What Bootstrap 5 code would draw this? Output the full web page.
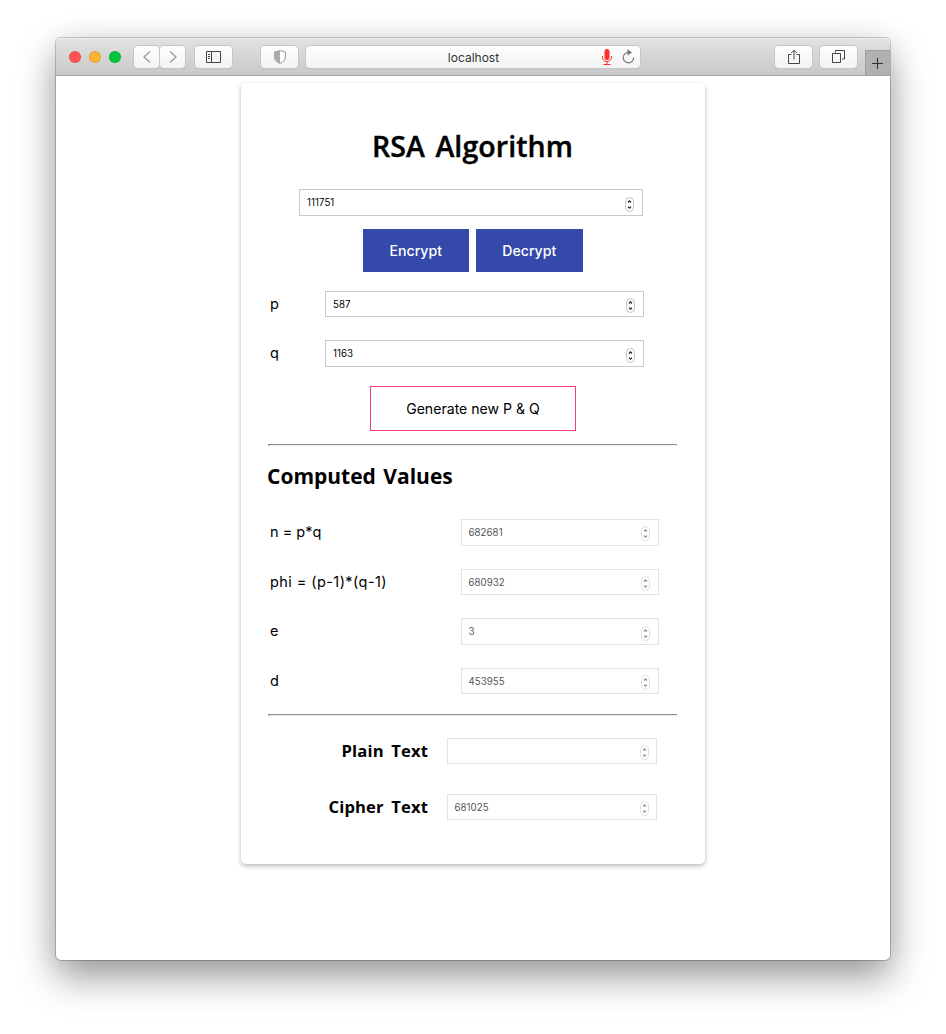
<!DOCTYPE html>
<html lang="en">
<head>
<meta charset="utf-8">
<meta name="viewport" content="width=device-width, initial-scale=1">
<title>RSA Algorithm</title>
<link href="https://cdn.jsdelivr.net/npm/bootstrap@5.3.0/dist/css/bootstrap.min.css" rel="stylesheet">
<style>
body{background:#fff;font-family:Inter,"Liberation Sans",sans-serif;color:#000;height:1034px;overflow:hidden;padding:38px 56px 0}
svg{display:block;flex:none}
.window{width:834px;height:922px;border-radius:5px;background:#fff;box-shadow:0 0 0 1px rgba(0,0,0,.2),0 17px 38px rgba(0,0,0,.4),0 0 30px rgba(0,0,0,.06)}
.toolbar{height:38px;background:linear-gradient(#e2e2e2,#c9c9c9);border-bottom:1px solid #a0a0a0;border-radius:5px 5px 0 0;box-shadow:inset 0 1px #f0f0f0;padding-left:13px}
.light{width:12px;height:12px;border-radius:50%;margin-right:8px;border:1px solid rgba(0,0,0,.1)}
.tool{height:22px;width:37px;border-radius:4px;background:linear-gradient(#fdfdfd,#f3f3f3);box-shadow:0 0 0 1px #c6c6c6,0 1px 1px #aaa;display:flex;align-items:center;justify-content:center}
.arrow{width:25px}
.address{width:334px;position:relative;font-size:12px;color:#333;padding:2px 0 0 1px}
.address-icons{position:absolute;right:5px;top:2px}
.plus{width:25px;height:25px;background:#b1b1b1;border:1px solid #a0a0a0;border-width:1px 0 0 1px;margin-top:12px}
.sheet{width:464px;height:781px;margin:7px auto 0;padding:0 28px 0 27px;border-radius:5px;box-shadow:0 2px 5px rgba(0,0,0,.28)}
h1,h2,h3{font-family:"Open Sans","Noto Sans",sans-serif;margin:0;white-space:nowrap}
h1{font-size:28.5px;font-weight:600;height:106px;padding-top:43px;line-height:40px;word-spacing:3px;letter-spacing:.1px;text-align:center;-webkit-text-stroke:.4px #000}
h2{font-size:21px;font-weight:700;height:73.2px;padding-top:15px;line-height:30px;word-spacing:2px;margin-left:-1px}
h3{font-size:16.6px;font-weight:700;width:160px;text-align:right;line-height:26px;margin-right:19px;word-spacing:3px;letter-spacing:.15px}
.field{border:1px solid #c9c9c9;height:26.6px;padding:0 8px 0 7px;font-size:9.7px;display:flex;align-items:center;justify-content:space-between;line-height:24px}
.field span{padding-top:1.4px;letter-spacing:.05px}
.field svg{margin-top:3px}
.message svg{margin-top:5px}
.field.off{border-color:#e2e2e2;color:#555;padding-left:6.5px}
.field.off svg{opacity:.52}
.message{width:344px;margin-left:31px}
.action{width:106.5px;height:43px;background:#3449a9;color:#fff;font-size:14.1px;font-weight:500;border:0;border-radius:0;padding:0}
.actions{gap:7px;margin:13.4px 0 18.7px}
.pair{height:26.6px;margin-bottom:23px;font-size:14.5px;padding-left:2px;line-height:26.6px}
.prime .name{width:55px}
.prime .field{width:319px}
.computed .name{width:191px}
.computed .name.long{letter-spacing:.42px}
.computed .field{width:198px}
.computed.last{margin-bottom:19.4px}
.generate{display:block;width:206px;height:45px;margin:-4px auto 13px;border:1px solid #f53d7e;border-radius:0;background:#fff;font-size:14.1px;padding:0 0 0 1px;color:#000}
.rule{width:409px;height:2px;background:linear-gradient(#8f8f8f 50%,#ededed 50%);border-left:1px solid #8f8f8f}
.output .field{width:210px;padding-right:7px}
.output{margin-bottom:29.4px}
</style>
</head>
<body>
<svg width="0" height="0" class="position-absolute"><defs>
<g id="stepper"><rect x=".5" y=".5" width="8" height="14" rx="4" fill="#fff" stroke="#c4c4c4"/><path d="M3 5.500 4.500 3.900 6 5.500M3 9.600l1.500 1.600L6 9.600" fill="none" stroke="#222" stroke-width="1.200"/></g>
</defs></svg>
<div class="window">
  <header class="toolbar d-flex align-items-center">
    <span class="light" style="background:#ff5552"></span><span class="light" style="background:#fdb436"></span><span class="light" style="background:#00c63b"></span>
    <span class="tool arrow" style="margin-left:5px"><svg width="12" height="14" fill="none" stroke="#999" stroke-width="1.3"><path d="M9 1.500 3 7l6 5.500"/></svg></span>
    <span class="tool arrow" style="margin-left:1px"><svg width="12" height="14" fill="none" stroke="#999" stroke-width="1.3"><path d="m3 1.500 6 5.500-6 5.500"/></svg></span>
    <span class="tool" style="margin-left:10px"><svg width="15" height="12" fill="none" stroke="#444"><path d="M.5.5h14v11H.5zM5.5.5v11M2 3.5h2M2 5.5h2M2 7.5h2"/></svg></span>
    <span class="tool" style="margin-left:29px"><svg width="12" height="14"><path d="M6 .6 11.4 2v5c0 3-2 5.1-5.4 6.4C2.6 12.100 .6 10 .6 7V2z" fill="#fff" stroke="#999"/><path d="M6 .6V13.400C2.600 12.100.6 10 .6 7V2z" fill="#aaa"/></svg></span>
    <span class="tool address" style="margin-left:8px">localhost
      <span class="address-icons d-flex gap-2"><svg width="12" height="18"><rect x="3.500" y="1" width="5" height="11" rx="2.5" fill="#ff2d2d"/><path d="M1.500 8v1.500a4.500 4 0 0 0 9 0V8M6 13.500v3M2.500 16.500h7" fill="none" stroke="#ff2d2d"/></svg><svg width="14" height="18" fill="none" stroke="#777" stroke-width="1.1"><path d="M8 4.500a5.200 5.200 0 1 0 4.600 5"/><path d="m6.500 1.300 4.500 3.200-4.500 2.900z" fill="#777" stroke="none"/></svg></span>
    </span>
    <span class="tool" style="margin-left:135px"><svg width="12" height="16" fill="none" stroke="#444"><path d="M3.500 5.500h-3v9h11v-9h-3M6 10.500v-9M3.200 4 6 1.200 8.800 4"/></svg></span>
    <span class="tool" style="margin-left:8px"><svg width="13" height="13" fill="none" stroke="#444"><path d="M.5 3.500h8v9h-8zM3.500 2.500v-2h9v8.500H10"/></svg></span>
    <span class="plus ms-auto"><svg width="24" height="23" stroke="#333" stroke-width="1.1"><path d="M6 12.500h11M11.500 7v11"/></svg></span>
  </header>
  <main class="sheet">
    <h1>RSA Algorithm</h1>
    <div class="field message"><span>111751</span><svg width="9" height="15"><use href="#stepper"/></svg></div>
    <div class="actions d-flex justify-content-center"><button class="action btn">Encrypt</button><button class="action btn">Decrypt</button></div>
    <div class="pair prime d-flex"><span class="name">p</span><div class="field"><span>587</span><svg width="9" height="15"><use href="#stepper"/></svg></div></div>
    <div class="pair prime d-flex"><span class="name">q</span><div class="field"><span>1163</span><svg width="9" height="15"><use href="#stepper"/></svg></div></div>
    <button class="generate btn">Generate new P &amp; Q</button>
    <div class="rule"></div>
    <h2>Computed Values</h2>
    <div class="pair computed d-flex"><span class="name">n = p*q</span><div class="field off"><span>682681</span><svg width="9" height="15"><use href="#stepper"/></svg></div></div>
    <div class="pair computed d-flex"><span class="name long">phi = (p-1)*(q-1)</span><div class="field off"><span>680932</span><svg width="9" height="15"><use href="#stepper"/></svg></div></div>
    <div class="pair computed d-flex"><span class="name">e</span><div class="field off"><span>3</span><svg width="9" height="15"><use href="#stepper"/></svg></div></div>
    <div class="pair computed last d-flex"><span class="name">d</span><div class="field off"><span>453955</span><svg width="9" height="15"><use href="#stepper"/></svg></div></div>
    <div class="rule" style="margin-bottom:22px"></div>
    <div class="output d-flex"><h3>Plain Text</h3><div class="field off"><span></span><svg width="9" height="15"><use href="#stepper"/></svg></div></div>
    <div class="output d-flex"><h3>Cipher Text</h3><div class="field off"><span>681025</span><svg width="9" height="15"><use href="#stepper"/></svg></div></div>
  </main>
</div>
<script src="https://cdn.jsdelivr.net/npm/bootstrap@5.3.0/dist/js/bootstrap.bundle.min.js"></script>
</body>
</html>
